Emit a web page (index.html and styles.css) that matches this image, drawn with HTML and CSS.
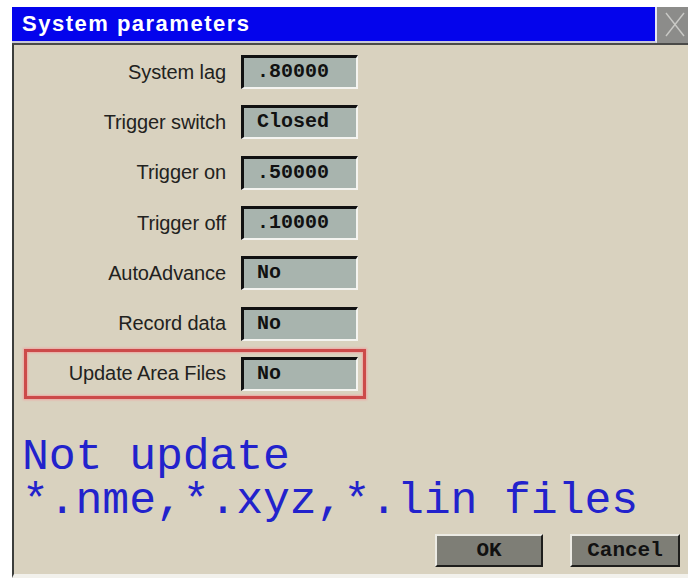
FILE: index.html
```html
<!DOCTYPE html>
<html lang="en">
<head>
<meta charset="utf-8">
<title>System parameters</title>
<link rel="stylesheet" href="styles.css">
</head>
<body>
<div class="window">
  <div class="titlebar">
    <div class="title">System parameters</div>
    <div class="close">
      <svg width="31" height="35" viewBox="0 0 31 35">
        <line x1="9" y1="6" x2="27" y2="29" />
        <line x1="27" y1="6" x2="9" y2="29" />
      </svg>
    </div>
  </div>
  <div class="panel">
    <div class="form">
      <div class="row"><span class="label">System lag</span><span class="field">.80000</span></div>
      <div class="row"><span class="label">Trigger switch</span><span class="field">Closed</span></div>
      <div class="row"><span class="label">Trigger on</span><span class="field">.50000</span></div>
      <div class="row"><span class="label">Trigger off</span><span class="field">.10000</span></div>
      <div class="row"><span class="label">AutoAdvance</span><span class="field">No</span></div>
      <div class="row"><span class="label">Record data</span><span class="field">No</span></div>
      <div class="row active"><span class="label">Update Area Files</span><span class="field">No</span></div>
    </div>
    <div class="hint">
      <div class="hint-line">Not update</div>
      <div class="hint-line">*.nme,*.xyz,*.lin files</div>
    </div>
    <div class="buttons">
      <button class="btn ok">OK</button>
      <button class="btn">Cancel</button>
    </div>
  </div>
</div>
</body>
</html>
```

FILE: styles.css
```css
html, body {
  margin: 0;
  padding: 0;
  background: #ffffff;
  width: 688px;
  height: 584px;
  overflow: hidden;
}

.window {
  margin: 7px 0 0 12px;
  width: 676px;
}

.titlebar {
  display: flex;
  height: 36px;
}

.title {
  flex: 1;
  background: #0404ec;
  border-right: 2px solid #e6e6f4;
  border-bottom: 2px solid #c8c8d8;
  color: #ffffff;
  font-family: "Liberation Sans", Arial, sans-serif;
  font-weight: bold;
  font-size: 22px;
  letter-spacing: 1.5px;
  line-height: 34px;
  padding-left: 10px;
}

.close {
  width: 31px;
  background: #8c8c8a;
}

.close svg {
  display: block;
}

.close line {
  stroke: #c9c9c6;
  stroke-width: 1.4;
}

.panel {
  background: #d9d2bf;
  border-top: 2px solid #4a4a48;
  border-left: 2px solid #3c3e3c;
  height: 535px;
  border-bottom: 4px solid #f2f1ec;
  box-sizing: border-box;
  display: flex;
  flex-direction: column;
}

.form {
  padding: 2px 0 0 10px;
  display: flex;
  flex-direction: column;
}

.row {
  width: 342px;
  height: 50.3px;
  box-sizing: border-box;
  border: 3px solid transparent;
  display: flex;
  align-items: center;
}

.row.active {
  border-color: #cc4a4a;
  box-shadow: 0 0 2px 1px #eea8a4, inset 0 0 2px 1px #eea8a4;
}

.label {
  width: 199px;
  margin-right: 15px;
  text-align: right;
  font-family: "Liberation Sans", Arial, sans-serif;
  font-size: 20px;
  color: #222220;
  letter-spacing: -0.1px;
}

.field {
  width: 117px;
  height: 34px;
  box-sizing: border-box;
  background: #a8b4ae;
  border-top: 3px solid #111111;
  border-left: 3px solid #111111;
  border-right: 2px solid #f4f4f0;
  border-bottom: 2px solid #f4f4f0;
  font-family: "Liberation Mono", "Courier New", monospace;
  font-weight: bold;
  font-size: 20px;
  line-height: 28px;
  padding-left: 13px;
  color: #111111;
}

.hint {
  margin: 36px 0 0 8px;
  font-family: "Liberation Mono", "Courier New", monospace;
  font-size: 44.8px;
  color: #2222cc;
  letter-spacing: -0.1px;
}

.hint-line {
  height: 44px;
  line-height: 44px;
}

.buttons {
  display: flex;
  justify-content: flex-end;
  gap: 27px;
  margin-top: 11px;
  padding-right: 8px;
}

.btn {
  width: 110px;
  height: 33px;
  box-sizing: border-box;
  background: #7e7e76;
  border-top: 2px solid #ecebe4;
  border-left: 2px solid #ecebe4;
  border-right: 2px solid #1e1e1c;
  border-bottom: 2px solid #1e1e1c;
  font-family: "Liberation Mono", "Courier New", monospace;
  font-weight: bold;
  font-size: 21px;
  color: #111111;
  padding: 0;
}

.btn.ok {
  width: 108px;
}
```
